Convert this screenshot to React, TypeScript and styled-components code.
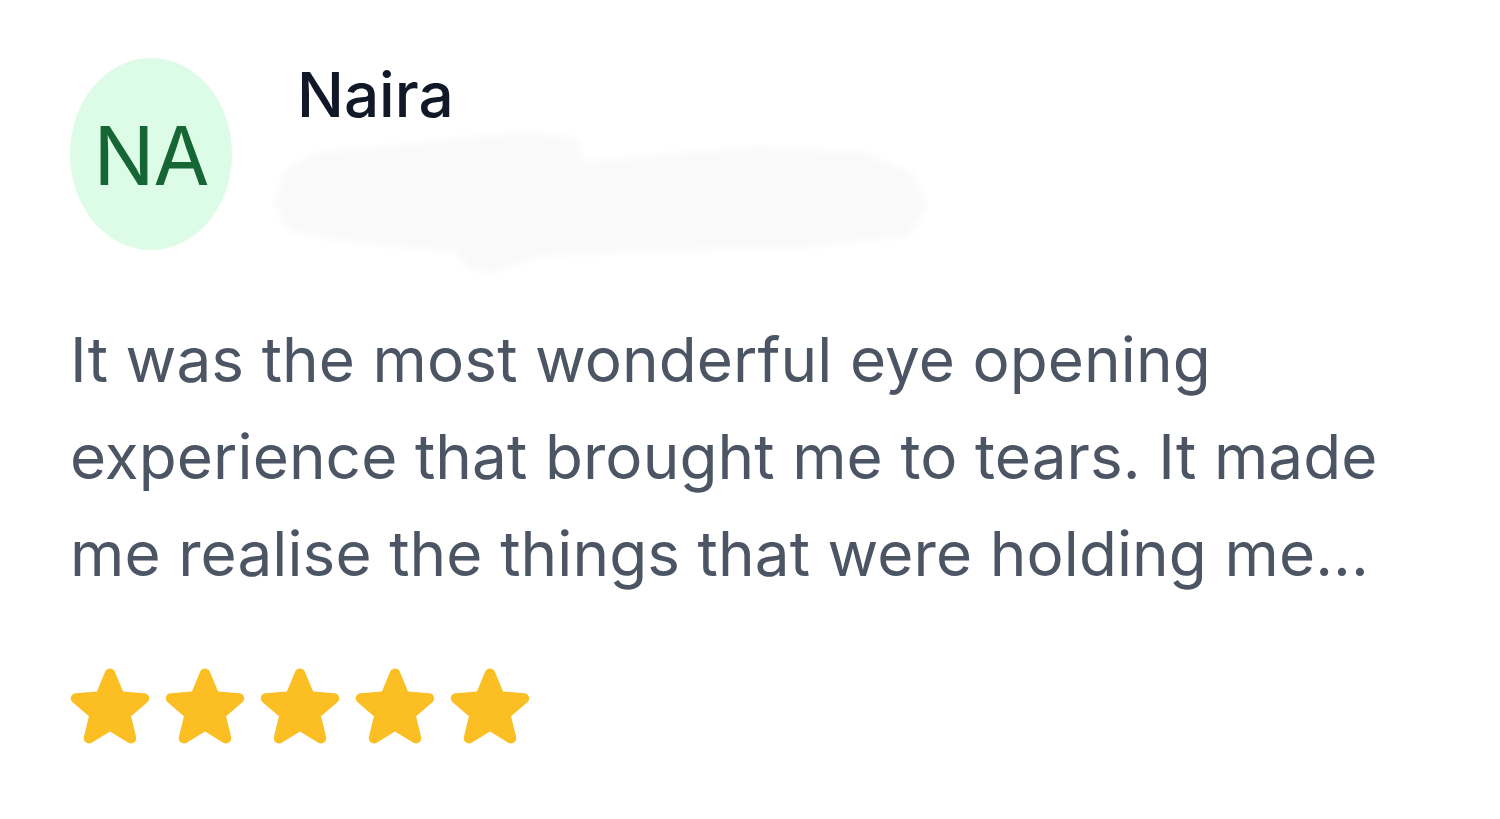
import React from "react";
import styled, { createGlobalStyle } from "styled-components";

const Global = createGlobalStyle`
  html, body { margin: 0; padding: 0; background: #ffffff; }
  body { font-family: Inter, "Noto Sans", sans-serif; }
`;

const Page = styled.div`
  padding: 58px 0 0 70px;
  width: 1500px;
  height: 819px;
  box-sizing: border-box;
  overflow: hidden;
`;

const Header = styled.div`
  display: flex;
  align-items: flex-start;
  gap: 65px;
`;

const Avatar = styled.div`
  width: 162px;
  height: 192px;
  border-radius: 50%;
  background: #dcfce7;
  color: #166534;
  display: flex;
  align-items: center;
  justify-content: center;
  font-size: 81px;
  font-weight: 400;
  letter-spacing: -1px;
  line-height: 1;
  padding-top: 4px;
  box-sizing: border-box;
`;

const Meta = styled.div`
  display: flex;
  flex-direction: column;
  padding-top: 6px;
  height: 192px;
  box-sizing: border-box;
`;

const Name = styled.div`
  font-size: 62px;
  line-height: 1;
  font-weight: 500;
  color: #111827;
`;

const Smudge = styled.svg`
  display: block;
  flex: none;
  width: 670px;
  height: 155px;
  margin: 0 0 0 -27px;
`;

const Body = styled.p`
  margin: 61px 0 0;
  font-size: 62px;
  line-height: 97px;
  font-weight: 400;
  letter-spacing: 0.1px;
  color: #4b5563;
  max-width: 1400px;
  white-space: nowrap;
`;

const Stars = styled.div`
  display: flex;
  gap: 15px;
  margin-top: 66px;
`;

const StarSvg = styled.svg`
  width: 80px;
  height: 76px;
  fill: #fbbf24;
  display: block;
`;

const Star = () => (
  <StarSvg viewBox="1.9 2.3 20.2 19.2">
    <path
      fillRule="evenodd"
      d="M10.788 3.21c.448-1.077 1.976-1.077 2.424 0l2.082 5.006 5.404.434c1.164.093 1.636 1.545.749 2.305l-4.117 3.527 1.257 5.273c.271 1.136-.964 2.033-1.96 1.425L12 18.354 7.373 21.18c-.996.608-2.231-.29-1.96-1.425l1.257-5.273-4.117-3.527c-.887-.76-.415-2.212.749-2.305l5.404-.434 2.082-5.005Z"
    />
  </StarSvg>
);

const RedactedLine = () => (
  <Smudge viewBox="0 0 670 155" aria-hidden="true">
    <defs>
      <filter id="soft" x="-10%" y="-30%" width="120%" height="160%">
        <feGaussianBlur stdDeviation="3" />
      </filter>
    </defs>
    <polygon
      filter="url(#soft)"
      fill="#f9f9f9"
      stroke="#f9f9f9"
      strokeWidth="12"
      strokeLinejoin="round"
      points="10,75 22,47 50,32 110,27 160,22 200,17 260,12 303,18 306,34 290,44 380,36 490,27 590,32 638,52 650,80 636,104 530,116 380,119 270,124 222,140 202,138 188,120 80,110 22,100"
    />
  </Smudge>
);

export default function App() {
  return (
    <>
      <Global />
      <Page>
        <Header>
          <Avatar>NA</Avatar>
          <Meta>
            <Name>Naira</Name>
            <RedactedLine />
          </Meta>
        </Header>
        <Body>
          It was the most wonderful eye opening
          <br />
          experience that brought me to tears. It made
          <br />
          me realise the things that were holding me...
        </Body>
        <Stars>
          {[0, 1, 2, 3, 4].map((i) => (
            <Star key={i} />
          ))}
        </Stars>
      </Page>
    </>
  );
}
